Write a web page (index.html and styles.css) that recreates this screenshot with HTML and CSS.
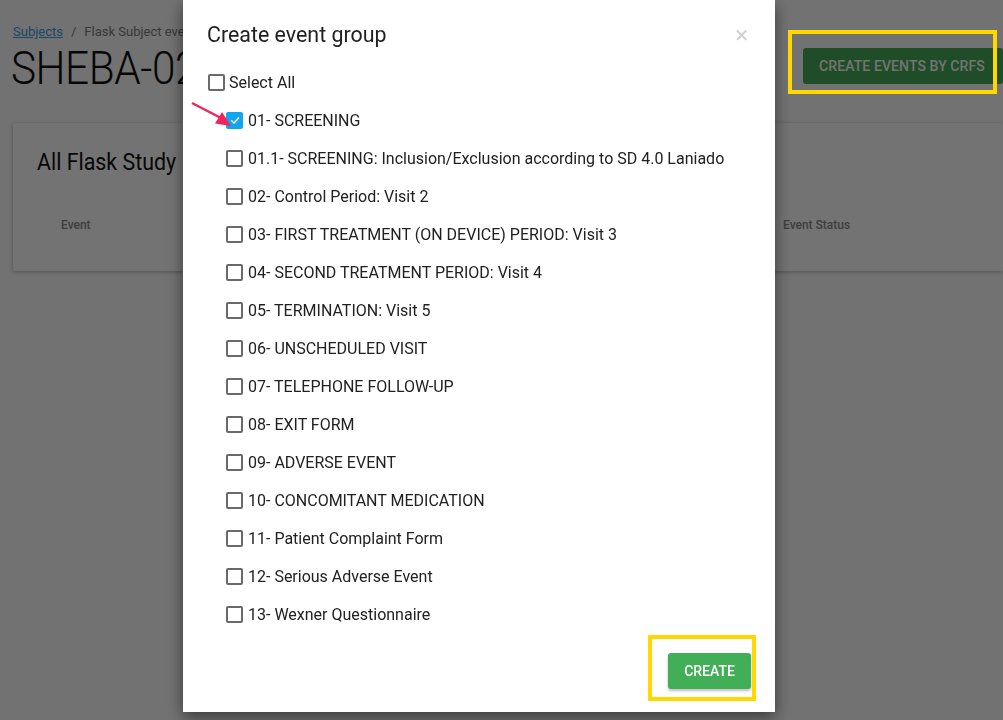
FILE: index.html
```html
<!DOCTYPE html>
<html>
<head>
<meta charset="utf-8">
<link rel="stylesheet" href="styles.css">
</head>
<body>
<div class="page">
  <header class="page-head">
    <div class="head-left">
      <nav class="crumbs"><a href="#" class="crumb-link">Subjects</a><span class="crumb-sep">/</span><span class="crumb-cur">Flask Subject eve</span></nav>
      <h1 class="subject-title">SHEBA-02</h1>
    </div>
    <button class="btn-crfs">CREATE EVENTS BY CRFS</button>
  </header>
  <section class="card">
    <h2 class="card-title">All Flask Study</h2>
    <div class="table-head">
      <span class="th th-event">Event</span>
      <span class="th th-status">Event Status</span>
    </div>
  </section>
</div>

<div class="overlay"></div>

<div class="modal">
  <div class="modal-head">
    <h3 class="modal-title">Create event group</h3>
    <span class="modal-close">&times;</span>
  </div>
  <div class="row row-all"><span class="box"></span><span class="label">Select All</span></div>
  <ul class="items">
    <li class="row"><span class="box box-checked"><svg viewBox="0 0 16 16" width="16" height="16"><path d="M4.2 8.3 L7 11 L12 5.5" fill="none" stroke="#fff" stroke-width="1.4"/></svg></span><span class="label">01- SCREENING</span></li>
    <li class="row"><span class="box"></span><span class="label">01.1- SCREENING: Inclusion/Exclusion according to SD 4.0 Laniado</span></li>
    <li class="row"><span class="box"></span><span class="label">02- Control Period: Visit 2</span></li>
    <li class="row"><span class="box"></span><span class="label">03- FIRST TREATMENT (ON DEVICE) PERIOD: Visit 3</span></li>
    <li class="row"><span class="box"></span><span class="label">04- SECOND TREATMENT PERIOD: Visit 4</span></li>
    <li class="row"><span class="box"></span><span class="label">05- TERMINATION: Visit 5</span></li>
    <li class="row"><span class="box"></span><span class="label">06- UNSCHEDULED VISIT</span></li>
    <li class="row"><span class="box"></span><span class="label">07- TELEPHONE FOLLOW-UP</span></li>
    <li class="row"><span class="box"></span><span class="label">08- EXIT FORM</span></li>
    <li class="row"><span class="box"></span><span class="label">09- ADVERSE EVENT</span></li>
    <li class="row"><span class="box"></span><span class="label">10- CONCOMITANT MEDICATION</span></li>
    <li class="row"><span class="box"></span><span class="label">11- Patient Complaint Form</span></li>
    <li class="row"><span class="box"></span><span class="label">12- Serious Adverse Event</span></li>
    <li class="row"><span class="box"></span><span class="label">13- Wexner Questionnaire</span></li>
  </ul>
  <div class="modal-foot">
    <button class="btn-create">CREATE</button>
  </div>
</div>

<div class="mark mark-crfs"></div>
<div class="mark mark-create"></div>
<svg class="arrow" viewBox="0 0 60 40" width="60" height="40">
  <line x1="2" y1="5" x2="30" y2="19.5" stroke="#f2225c" stroke-width="2.4"/>
  <polygon points="41,28 25,25.5 32,14" fill="#f2225c"/>
</svg>
</body>
</html>
```

FILE: styles.css
```css
html, body {
  margin: 0;
  padding: 0;
  overflow: hidden;
}
body {
  width: 1003px;
  height: 720px;
  background: #fcfcfc;
  font-family: Roboto, "Liberation Sans", sans-serif;
  color: #212121;
}
.page {
  padding: 0 0 0 13px;
}
.page-head {
  display: flex;
  justify-content: space-between;
  align-items: flex-start;
  height: 123px;
}
.head-left {
  padding-top: 24px;
}
.crumbs {
  font-size: 13px;
  line-height: 16px;
  color: #7d7d7d;
}
.crumb-link {
  color: #3a9fe0;
  text-decoration: underline;
}
.crumb-sep {
  margin: 0 8px;
}
.subject-title {
  margin: 1px 0 0 -2px;
  font-size: 47px;
  font-weight: 300;
  line-height: 54px;
  letter-spacing: -0.5px;
  color: #111;
  transform: scaleX(0.9);
  transform-origin: left center;
  white-space: nowrap;
}
.btn-crfs {
  flex: none;
  margin-top: 48px;
  width: 200px;
  height: 36px;
  border: none;
  border-radius: 3px;
  background: #45ab57;
  color: #fff;
  font-family: Roboto, sans-serif;
  font-size: 14px;
  font-weight: 500;
  letter-spacing: 0.1px;
  text-align: left;
  padding-left: 16px;
}
.card {
  height: 148px;
  background: #fff;
  box-shadow: 0 1px 4px rgba(0,0,0,0.3);
  border-radius: 2px;
  padding: 25px 0 0 24px;
  box-sizing: border-box;
}
.card-title {
  margin: 0;
  font-size: 23px;
  font-weight: 400;
  line-height: 30px;
  color: #111;
  transform: scaleX(0.93);
  transform-origin: left center;
  white-space: nowrap;
}
.table-head {
  display: flex;
  margin-top: 40px;
  padding-left: 24px;
  font-size: 12px;
  font-weight: 500;
  color: #8a8a8a;
}
.th-event { width: 722px; }

.overlay {
  position: fixed;
  inset: 0;
  background: rgba(0,0,0,0.55);
}

.modal {
  position: fixed;
  left: 183px;
  top: 0;
  width: 592px;
  height: 712px;
  box-sizing: border-box;
  background: #fff;
  box-shadow: 0 5px 15px rgba(0,0,0,0.5);
  padding: 22px 24px 23px 24px;
  display: flex;
  flex-direction: column;
}
.modal-head {
  display: flex;
  justify-content: space-between;
  align-items: center;
}
.modal-title {
  margin: 0;
  font-size: 21.4px;
  font-weight: 400;
  line-height: 26px;
  color: #212121;
}
.modal-close {
  font-size: 24px;
  line-height: 26px;
  color: #d0d0d0;
  margin-right: 3px;
}
.row {
  display: flex;
  align-items: center;
  height: 38px;
  font-size: 16px;
}
.row-all {
  margin-top: 16px;
  height: 37px;
}
.items {
  list-style: none;
  margin: 0;
  padding: 0 0 0 19px;
}
.box {
  flex: none;
  box-sizing: border-box;
  width: 17px;
  height: 17px;
  border: 2px solid #6a6a6a;
  border-radius: 2px;
  margin: 0 5px 0 0;
  display: flex;
  align-items: center;
  justify-content: center;
}
.row-all .box {
  margin-left: 1px;
  margin-right: 4px;
}
.box-checked {
  border: none;
  background: #13a4f0;
}
.label {
  color: #212121;
  white-space: nowrap;
}
.modal-foot {
  margin-top: auto;
  display: flex;
  justify-content: flex-end;
}
.btn-create {
  width: 83px;
  height: 36px;
  border: none;
  border-radius: 3px;
  background: #43ae58;
  color: #fff;
  font-family: Roboto, sans-serif;
  font-size: 14px;
  font-weight: 500;
  box-shadow: 0 2px 3px rgba(0,0,0,0.25);
}
.mark {
  position: fixed;
  border: 4px solid #ffd800;
  box-sizing: border-box;
}
.mark-crfs {
  left: 788px;
  top: 30px;
  width: 209px;
  height: 64px;
}
.mark-create {
  left: 648px;
  top: 635px;
  width: 108px;
  height: 66px;
}
.arrow {
  position: fixed;
  left: 190px;
  top: 98px;
}
```
